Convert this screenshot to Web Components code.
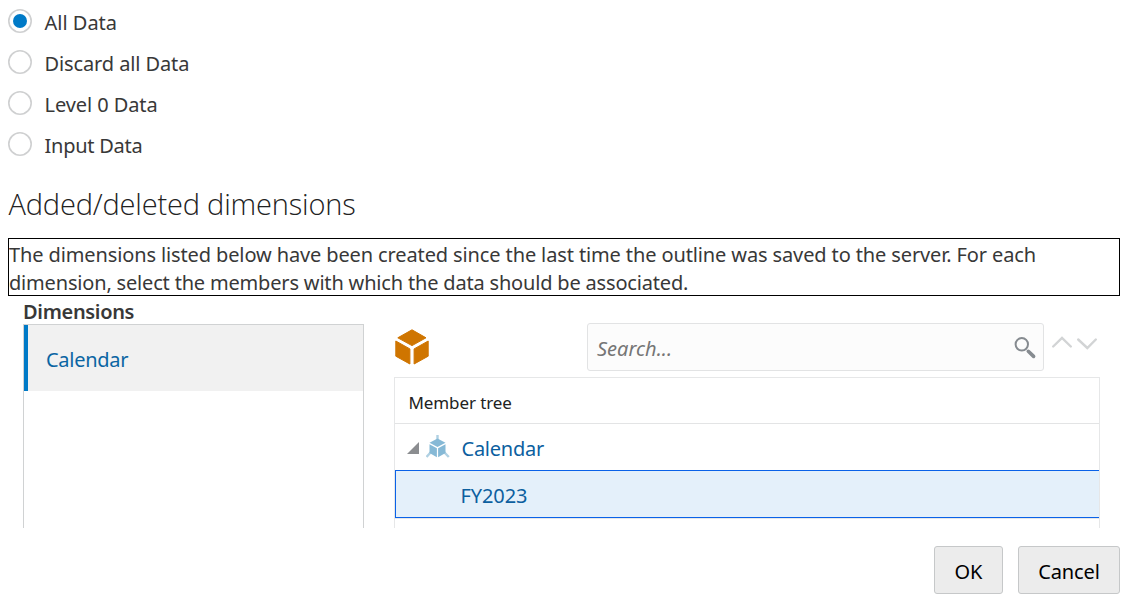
<!DOCTYPE html>
<html lang="en">
<head>
<meta charset="utf-8">
<title>Added/deleted dimensions</title>
<style>
html,body{margin:0;background:#fff}
body{width:1124px;height:600px;overflow:hidden;font-family:"Noto Sans","Open Sans",sans-serif;font-size:20px;color:#383838}
</style>
</head>
<body>
<restructure-dialog></restructure-dialog>
<script>
const define = (name, html, setup) => customElements.define(name, class extends HTMLElement {
  connectedCallback() {
    if (this.shadowRoot) return;
    this.attachShadow({ mode: 'open' }).innerHTML = html;
    if (setup) setup(this, this.shadowRoot);
  }
});

/* Single line of text; the track attribute sets its letter spacing. */
define('text-line', `<style>:host{display:inline-block;white-space:nowrap}</style><slot></slot>`, el => {
  el.style.letterSpacing = (el.getAttribute('track') || 0) + 'px';
});

define('radio-option', `<style>
:host{display:flex;height:41px;align-items:flex-start;line-height:28px}
svg{margin:9px 12.5px 0 8px}
circle{fill:#fff;stroke:#cfd0d1;stroke-width:1.6}
.dot{display:none;fill:#007ac7;stroke:none}
:host([checked]) .dot{display:block}
div{padding-top:9px}
</style><svg width="24" height="24"><circle cx="12" cy="12" r="11.2"/><circle class="dot" cx="12" cy="12" r="7"/></svg><div><slot></slot></div>`);

define('section-title', `<style>:host{display:block;font:330 29px/40px "Open Sans",sans-serif;color:#222;padding-left:8.5px}</style><slot></slot>`);

define('info-box', `<style>:host{display:flex;flex-direction:column;box-sizing:border-box;width:1112px;height:58px;margin-left:8px;border:1px solid #000;line-height:28px;padding-top:2px}</style><slot></slot>`);

define('dimension-list', `<style>
:host{display:block;width:341px}
header{height:26px;line-height:26px;padding-top:1px;font-weight:600;box-sizing:border-box}
section{box-sizing:border-box;height:204px;border:1px solid #d0d2d3;border-bottom:0}
</style><header><slot name="title"></slot></header><section><slot></slot></section>`);

define('dimension-item', `<style>
:host{display:block;box-sizing:border-box;height:66px;background:#f1f1f1;border-left:4px solid #007ac7;padding-left:18px;line-height:70px;color:#0a65a3}
</style><slot></slot>`);

define('cube-icon', `<style>:host{display:block;width:34px;height:36px}svg{display:block}</style>
<svg width="34" height="36" viewBox="0 0 34 36" fill="#cf7500" stroke="#cf7500" stroke-linejoin="round"><path d="M17 .8 31 8.8 17 16.6 2.8 8.8Z"/><path d="M.8 12 14.9 19.9V35L.8 27.2Z"/><path d="M33.2 12 19.1 19.9V35L33.2 27.2Z"/></svg>`);

define('search-field', `<style>
:host{display:flex;box-sizing:border-box;width:457px;height:48px;border:1px solid #e2e3e4;border-radius:3px;background:#fcfcfc;justify-content:space-between;padding-left:9px;line-height:50px;font-style:italic;color:#757575}
svg{margin:13px 6px 0 0}
</style><span><slot></slot></span>
<svg width="23" height="23" viewBox="0 0 23 23" fill="none" stroke="#868b90"><circle cx="7.8" cy="7.3" r="6.2" stroke-width="2"/><path d="M14.3 14.3 19.6 19.4" stroke-width="3.6" stroke-linecap="round"/></svg>`);

define('step-arrows', `<style>:host{display:flex;gap:5px;margin:13px 0 0 8px}</style>
<svg width="20" height="15" fill="none" stroke="#d2d4d5" stroke-width="2.4" stroke-linecap="round"><path d="M1.2 10.5 10 2 18.8 10.5"/></svg>
<svg width="20" height="15" fill="none" stroke="#d2d4d5" stroke-width="2.4" stroke-linecap="round"><path d="M1.2 3.5 10.3 12 18.8 3.5"/></svg>`);

define('member-tree', `<style>
:host{display:block;box-sizing:border-box;width:706px;height:151px;border:1px solid #e6e7e8;border-bottom:0}
header{height:45px;line-height:50px;padding-left:13.5px;border-bottom:1px solid #e3e4e5;color:#222;font-size:17px}
footer{border-top:1px solid #e6e7e8}
</style><header><slot name="title"></slot></header><slot></slot><footer></footer>`);

define('tree-row', `<style>
:host{display:flex;box-sizing:border-box;height:46px;line-height:49px;color:#0c5f9f}
:host([selected]){height:48px;background:#e4f0fa;border:1px solid #0a62e8;border-right:0;padding-left:64.5px}
:host([selected]) svg{display:none}
.t{margin:18px 7px 0 12px}.n{margin:11px 11.5px 0 0}
</style>
<svg class="t" width="12" height="12"><path d="M12 0V12H0Z" fill="#8b8d90"/></svg>
<svg class="n" width="24" height="24" viewBox="0 0 24 24" fill="#86b9d6"><g stroke="#b0d1e3" stroke-width="2.4"><path d="M11.5 0V7M5 17 .5 22M18 17 22.8 22"/></g><path d="M11.5 3.5 19.5 7.8 11.5 12 3.5 7.8Z"/><path d="M3.5 9.2 10.9 13.2V22.3L3.5 18Z"/><path d="M19.5 9.2 12.1 13.2V22.3L19.5 18Z"/></svg>
<slot></slot>`);

define('push-button', `<style>
:host{display:block}
button{all:unset;box-sizing:border-box;height:48px;width:var(--w);border:1px solid #c6c8c9;border-radius:3px;background:#ececec;color:#000;text-align:center;line-height:50px}
</style><button><slot></slot></button>`);

define('restructure-dialog', `<style>
:host{display:block;width:1124px;height:600px;overflow:hidden}
.radios{height:184px}
section-title{height:54px}
.panes{display:flex;gap:30px;padding-left:23px;height:230px;margin-top:2px}
.tools{display:flex;align-items:flex-start;padding-top:25px;height:79px;box-sizing:border-box}
.tools cube-icon{margin:6px 158px 0 1px}
.right{width:706px}
.buttons{display:flex;gap:15px;justify-content:flex-end;padding:18px 4px 0 0}
</style>
<div class="radios">
<radio-option checked><text-line>All Data</text-line></radio-option>
<radio-option><text-line track="-.11">Discard all Data</text-line></radio-option>
<radio-option><text-line track="-.08">Level 0 Data</text-line></radio-option>
<radio-option><text-line track="-.25">Input Data</text-line></radio-option>
</div>
<section-title><text-line track="-.18">Added/deleted dimensions</text-line></section-title>
<info-box><text-line track="-.12">The dimensions listed below have been created since the last time the outline was saved to the server. For each</text-line><text-line track="-.18">dimension, select the members with which the data should be associated.</text-line></info-box>
<div class="panes">
<dimension-list><text-line slot="title" track="-.33">Dimensions</text-line><dimension-item><text-line track="-.28">Calendar</text-line></dimension-item></dimension-list>
<div class="right"><div class="tools"><cube-icon></cube-icon><search-field><text-line>Search...</text-line></search-field><step-arrows></step-arrows></div>
<member-tree><text-line slot="title" track="-.1">Member tree</text-line><tree-row><text-line track="-.25">Calendar</text-line></tree-row><tree-row selected><text-line track="-.1">FY2023</text-line></tree-row></member-tree></div>
</div>
<div class="buttons"><push-button style="--w:69px"><text-line>OK</text-line></push-button><push-button style="--w:102px"><text-line track="-.1">Cancel</text-line></push-button></div>
`);
</script>
</body>
</html>
